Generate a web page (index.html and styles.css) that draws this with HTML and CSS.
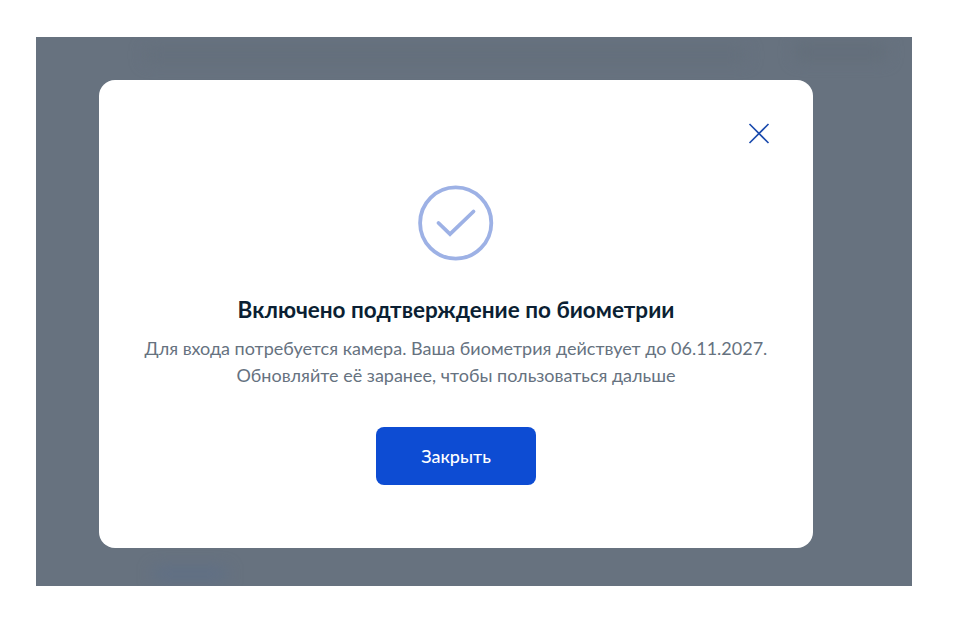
FILE: index.html
```html
<!DOCTYPE html>
<html lang="ru">
  <head>
    <meta charset="UTF-8" />
    <meta name="viewport" content="width=device-width, initial-scale=1.0" />
    <title>Биометрия</title>
    <link rel="stylesheet" href="styles.css">
  </head>
  <body>
    <div class="overlay">
      <div class="smudge smudge-top"></div>
      <div class="smudge smudge-top-right"></div>
      <div class="smudge smudge-link"></div>

      <div class="modal">
        <button class="close" aria-label="Закрыть">
          <svg width="22" height="22" viewBox="0 0 22 22">
            <path d="M1.5 1 L20.5 20 M20.5 1 L1.5 20" fill="none" stroke="#1a4aad" stroke-width="1.6" />
          </svg>
        </button>

        <svg class="check" width="76" height="76" viewBox="0 0 76 76">
          <circle cx="37.7" cy="38" r="35.6" fill="none" stroke="#9db1e5" stroke-width="3.8" />
          <path d="M20.5 38 L32 49 L55.5 26.5" fill="none" stroke="#9db1e5" stroke-width="3.8" stroke-linecap="round" />
        </svg>

        <h2 class="title">Включено подтверждение по биометрии</h2>
        <p class="text">Для входа потребуется камера. Ваша биометрия действует до 06.11.2027.<br>Обновляйте её заранее, чтобы пользоваться дальше</p>

        <button class="primary">Закрыть</button>
      </div>
    </div>
  </body>
</html>
```

FILE: styles.css
```css
html, body {
    margin: 0;
    height: 100%;
    background-color: #fff;
}
body {
    padding: 37px 48px 44px 36px;
    box-sizing: border-box;
    font-family: Lato, "Noto Sans", sans-serif;
}
.overlay {
    position: relative;
    overflow: hidden;
    box-sizing: border-box;
    height: 549px;
    padding: 43px 99px 38px 63px;
    background-color: #67727f;
}
.smudge {
    position: absolute;
    filter: blur(8px);
}
.smudge-top {
    left: 110px;
    top: 12px;
    width: 600px;
    height: 12px;
    background-color: #636e7b;
}
.smudge-top-right {
    left: 760px;
    top: 8px;
    width: 90px;
    height: 14px;
    background-color: #626d79;
}
.smudge-link {
    left: 118px;
    top: 532px;
    width: 72px;
    height: 10px;
    background-color: #5c6e89;
}
.modal {
    position: relative;
    box-sizing: border-box;
    height: 468px;
    padding-top: 105px;
    background-color: #fff;
    border-radius: 16px;
    display: flex;
    flex-direction: column;
    align-items: center;
    text-align: center;
}
.close {
    position: absolute;
    top: 43px;
    right: 43px;
    padding: 0;
    border: none;
    background: none;
    cursor: pointer;
    line-height: 0;
}
.check {
    display: block;
}
.title {
    margin: 34px 0 0;
    font-size: 22.5px;
    line-height: 30px;
    font-weight: 700;
    color: #0b1f33;
}
.text {
    margin: 10px 0 0;
    font-size: 18px;
    line-height: 27px;
    color: #66727f;
}
.primary {
    margin-top: 38px;
    width: 160px;
    height: 58px;
    border: none;
    border-radius: 8px;
    background-color: #0d4cd3;
    color: #fff;
    font-family: inherit;
    font-size: 18px;
    font-weight: 500;
    cursor: pointer;
}
```
